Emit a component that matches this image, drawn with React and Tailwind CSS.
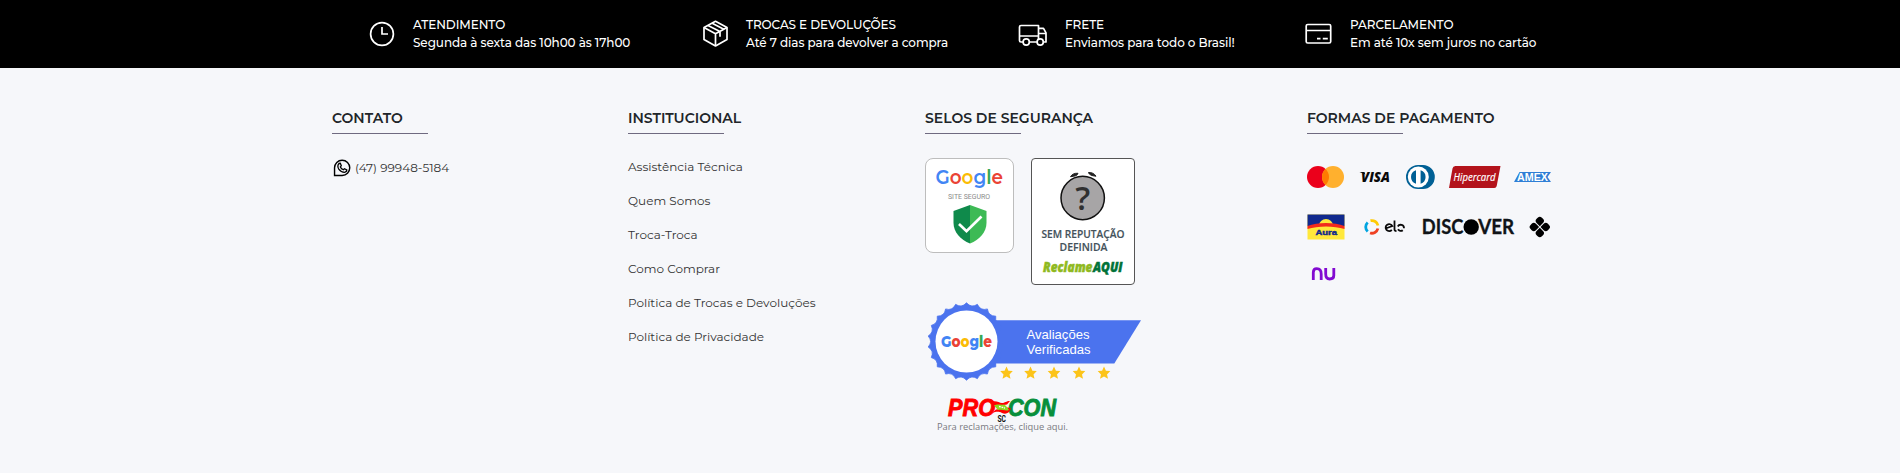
const LINKS = [
  "Assistência Técnica",
  "Quem Somos",
  "Troca-Troca",
  "Como Comprar",
  "Política de Trocas e Devoluções",
  "Política de Privacidade",
];

function ClockIcon() {
  return (
    <svg width="28" height="28" viewBox="0 0 28 28" fill="none" stroke="white" strokeWidth="1.7">
      <circle cx="14" cy="14" r="11.4" />
      <path d="M14 7v7h6" />
    </svg>
  );
}

function BoxIcon() {
  return (
    <svg width="28" height="28" viewBox="0 0 28 28" fill="none" stroke="white" strokeWidth="1.7" strokeLinejoin="round">
      <path d="M14.500 1.300 26 7.500v12L14.500 26 3 19.500V7.500Z" />
      <path d="M3 7.500 14.500 13.800 26 7.500M14.500 13.800V26M7 5.600l12 6v5.200M11.200 3.300l11.600 6" />
    </svg>
  );
}

function TruckIcon() {
  return (
    <svg width="30" height="28" viewBox="0 0 30 28" fill="none" stroke="white" strokeWidth="1.7" strokeLinejoin="round">
      <path d="M5 22H3a1.500 1.500 0 0 1-1.500-1.500V7A1.500 1.500 0 0 1 3 5.500h17.500V22h-9M1.500 16h19M20.500 8.300h5l2.500 4.500V22h-2M28 13.500h-7.500" />
      <circle cx="8.200" cy="22" r="3.100" />
      <circle cx="22.200" cy="22" r="3.100" fill="black" />
    </svg>
  );
}

function CardIcon() {
  return (
    <svg width="28" height="28" viewBox="0 0 28 28" fill="none" stroke="white" strokeWidth="1.700">
      <rect x="1.200" y="4.500" width="24.500" height="18.500" rx="1.500" />
      <path d="M1.200 10.500h24.500M12 18.700h3.500M17.800 18.700h5" />
    </svg>
  );
}

function Perk({ icon, title, text, className }) {
  return (
    <div className={"flex items-center " + className}>
      {icon}
      <div className="ml-[17px] whitespace-nowrap text-[12px] leading-[18px] font-medium tracking-[-0.08px] text-white">
        <p>{title}</p>
        <p>{text}</p>
      </div>
    </div>
  );
}

function Title({ children }) {
  return (
    <h3 className="whitespace-nowrap text-[14px] leading-[20px] font-semibold text-[#212529]">
      {children}
      <span className="mt-[5px] block h-px w-24 bg-[#6f6a80]" />
    </h3>
  );
}

function GoogleWord({ x, y, width, size, bold }) {
  return (
    <text x={x} y={y} fontSize={size} textLength={width} lengthAdjust="spacingAndGlyphs" fontFamily="Montserrat, Inter, sans-serif" fontWeight={bold ? 800 : 600}>
      <tspan fill="#4285f4">G</tspan>
      <tspan fill="#ea4335">o</tspan>
      <tspan fill="#fbbc05">o</tspan>
      <tspan fill="#4285f4">g</tspan>
      <tspan fill="#34a853">l</tspan>
      <tspan fill="#ea4335">e</tspan>
    </text>
  );
}

function SafeSiteSeal() {
  return (
    <div className="h-[95px] w-[89px] rounded-[8px] border border-[#bdbdbd] bg-white">
      <svg className="overflow-visible" width="87" height="93" viewBox="1 1 87 93">
        <GoogleWord x="10.500" y="25.500" width="67.500" size="21" />
        <text x="23" y="41" fontSize="7.200" textLength="42" lengthAdjust="spacingAndGlyphs" fill="#8a8a8a" fontFamily="Roboto, sans-serif">SITE SEGURO</text>
        <path d="M45 47 28.500 53v12c0 9 7 17 16.500 20.500Z" fill="#0f8a4b" />
        <path d="M45 47 61.500 53v12c0 9-7 17-16.500 20.500Z" fill="#3dba55" />
        <path d="m34 66 7.500 7.200L56.500 58.500" fill="none" stroke="white" strokeWidth="2.700" />
      </svg>
    </div>
  );
}

function ReputationSeal() {
  return (
    <div className="h-[127px] w-[104px] rounded-[4px] border border-[#555] bg-white">
      <svg className="overflow-visible" width="102" height="125" viewBox="1 1 102 125">
        <circle cx="51.700" cy="40" r="21.700" fill="#a7a5a6" stroke="#111" strokeWidth="1.500" />
        <path d="M39.500 18.700c1.500-2.500 4-3.700 7.500-3.400-.5 2.200-3 3-7.500 3.400ZM65 18.200c-1.500-2.500-4.500-4-7.500-3.700.5 2.200 3.500 3.400 7.500 3.700Z" fill="#222" stroke="#222" />
        <text x="51.700" y="52" textAnchor="middle" fontSize="33" fontWeight="600" fill="#303030" fontFamily="'Open Sans', sans-serif">?</text>
        <g fontFamily="'Open Sans', sans-serif" fontSize="10.500" fontWeight="600" fill="#44525b" stroke="#44525b" strokeWidth="0.150">
          <text x="10.500" y="80" textLength="83" lengthAdjust="spacingAndGlyphs">SEM REPUTAÇÃO</text>
          <text x="28.500" y="93" textLength="48" lengthAdjust="spacingAndGlyphs">DEFINIDA</text>
        </g>
        <g fontFamily="'Open Sans', sans-serif" fontSize="14" fontWeight="800" fontStyle="italic" strokeWidth="0.500">
          <text x="12" y="113.700" textLength="49.500" lengthAdjust="spacingAndGlyphs" fill="#8fb920" stroke="#8fb920">Reclame</text>
          <text x="62" y="113.700" textLength="29.500" lengthAdjust="spacingAndGlyphs" fill="#007238" stroke="#007238">AQUI</text>
        </g>
      </svg>
    </div>
  );
}

function scallopedDisc(cx, cy, outer, inner, lobes) {
  const point = (i, r) => {
    const a = (i * Math.PI) / lobes - Math.PI / 2;
    return `${(cx + r * Math.cos(a)).toFixed(2)} ${(cy + r * Math.sin(a)).toFixed(2)}`;
  };
  let d = `M${point(0, inner)}`;
  for (let i = 0; i < lobes; i++) d += `Q${point(2 * i + 1, outer)} ${point(2 * i + 2, inner)}`;
  return d + "Z";
}

const STARS = [81.500, 105.500, 129, 154, 179];

function VerifiedReviews() {
  return (
    <svg className="overflow-visible" width="220" height="82" viewBox="0 0 220 82">
      <path d="M60 20.200h156L189.300 63.500H60Z" fill="#4b73ee" />
      <path d={scallopedDisc(41.500, 41.500, 33.500, 38.700, 22)} fill="#4b73ee" stroke="#4b73ee" strokeWidth="0.800" strokeLinejoin="round" />
      <circle cx="41.500" cy="41.500" r="31" fill="white" />
      <GoogleWord x="16" y="46.500" width="51" size="16.500" bold />
      <g fill="white" fontFamily="'Liberation Sans', sans-serif" fontSize="13">
        <text x="101.500" y="39" textLength="63" lengthAdjust="spacingAndGlyphs">Avaliações</text>
        <text x="101.500" y="53.500" textLength="64" lengthAdjust="spacingAndGlyphs">Verificadas</text>
      </g>
      {STARS.map((x) => (
        <path key={x} transform={`translate(${x} 73)`} d="M0-6.500 1.900-2.200 6.300-1.900 3 1.400 4 5.800 0 3.500-4 5.800-3 1.400-6.300-1.900-1.900-2.200Z" fill="#fcc419" />
      ))}
    </svg>
  );
}

function Procon() {
  return (
    <svg className="overflow-visible" width="150" height="42" viewBox="0 0 150 42">
      <g fontFamily="'Liberation Sans', sans-serif" fontStyle="italic" fontWeight="700" fontSize="23" strokeWidth="0.900">
        <text x="23" y="23.500" textLength="47" lengthAdjust="spacingAndGlyphs" fill="#f00" stroke="#f00">PRO</text>
        <text x="83" y="23.500" textLength="48" lengthAdjust="spacingAndGlyphs" fill="#078f3b" stroke="#078f3b">CON</text>
      </g>
      <path d="M66 10c5-2 8 1 11 1 3 0 4-2 8-2l-3 3.500-13 2ZM67 21l4-3.500 12-2 3 1c-2 5-5 6-9 4.500-4-2-6-1-10 0Z" fill="#f00" />
      <path d="M69 13.500c4-2 6 0 10-1 2 1 4 3.500 5 5.500-4 1.500-7-1-11 0Z" fill="#8ddb20" />
      <path d="M74 14.500l6 1.500" stroke="white" strokeWidth="1.300" strokeDasharray="1.800 .8" />
      <text x="72.500" y="30" fontSize="9.500" textLength="8.500" lengthAdjust="spacingAndGlyphs" fontWeight="700" fill="#111" stroke="#f6f7fa" strokeWidth="1" paintOrder="stroke" fontFamily="Roboto, sans-serif">SC</text>
      <text x="12" y="37.500" fontSize="9.500" textLength="131" lengthAdjust="spacingAndGlyphs" fill="#78797f" fontFamily="'Open Sans', sans-serif">Para reclamações, clique aqui.</text>
    </svg>
  );
}

function Mastercard() {
  return (
    <svg width="37" height="26" viewBox="0 0 37 26">
      <circle cx="11" cy="13" r="11" fill="#eb001b" />
      <circle cx="26" cy="13" r="11" fill="#ffb02e" />
      <path d="M18.500 4.950a11 11 0 0 1 0 16.100 11 11 0 0 1 0-16.100Z" fill="#ff7a00" />
    </svg>
  );
}

function Visa() {
  return (
    <svg className="overflow-visible" width="32" height="26" viewBox="0 0 32 26">
      <text x="1" y="18" fontSize="14" textLength="29" lengthAdjust="spacingAndGlyphs" fontWeight="800" fontStyle="italic" fill="#0a0a0a" fontFamily="'Open Sans', sans-serif">VISA</text>
      <path d="M-.5 8h4.500l1.500 2.500Z" fill="#0a0a0a" />
    </svg>
  );
}

function Diners() {
  return (
    <svg width="30" height="26" viewBox="0 0 30 26">
      <path d="M12 1h5a11.800 12 0 0 1 0 24h-5a12 12 0 0 1 0-24Z" fill="#006095" />
      <circle cx="12.300" cy="13" r="10.500" fill="white" />
      <path d="M10 6.300a7 7 0 0 0 0 13.400ZM14.600 6.300a7 7 0 0 1 0 13.400Z" fill="#006095" />
    </svg>
  );
}

function Hipercard() {
  return (
    <svg className="overflow-visible" width="52" height="26" viewBox="0 0 52 26">
      <path d="M6.500 2H51.500l-3.800 20a2.500 2.500 0 0 1-2.500 2H0L3.500 4.500A3 3 0 0 1 6.500 2Z" fill="#b3131b" />
      <text x="4.500" y="16.700" fontSize="11.500" textLength="42" lengthAdjust="spacingAndGlyphs" fontStyle="italic" fill="white" stroke="white" strokeWidth="0.200" fontFamily="'Open Sans', sans-serif">Hipercard</text>
    </svg>
  );
}

function Amex() {
  return (
    <svg className="overflow-visible" width="38" height="26" viewBox="0 0 38 26">
      <path d="M5.500 8H37l-3.500 5 3.500 5H0Z" fill="#2f7fd6" />
      <text x="3" y="16.700" fontSize="10.500" textLength="31" lengthAdjust="spacingAndGlyphs" fontWeight="700" fill="white" fontFamily="'Liberation Sans', sans-serif">AMEX</text>
    </svg>
  );
}

function Aura() {
  return (
    <svg width="38" height="26" viewBox="0 0 38 26">
      <path d="M.5.500h37v25H.500Z" fill="#ffe83b" />
      <path d="M.500.500h37V12H.500Z" fill="#10298e" />
      <path d="M12 11.500a7 6.500 0 0 1 14 0Z" fill="#ffe83b" />
      <path d="M.500 12c10-4 27-4 37 0V15C27 11.500 11 11.500.500 15Z" fill="#f22a1d" />
      <text x="8.500" y="21.200" fontSize="7" textLength="21.500" lengthAdjust="spacingAndGlyphs" fontWeight="700" fill="#10298e" stroke="#10298e" strokeWidth="0.400" fontFamily="'Liberation Sans', sans-serif">Aura</text>
    </svg>
  );
}

function Elo() {
  return (
    <svg width="42" height="26" viewBox="0 0 42 26">
      <g fill="none" strokeWidth="2.800">
        <path d="M6.500 6.700A6.300 6.300 0 0 1 14 11.500" stroke="#ffcb05" />
        <path d="M13.900 14.500A6.300 6.300 0 0 1 6 19" stroke="#ef4123" />
        <path d="M3.700 8.400a6.300 6.300 0 0 0 0 9.200" stroke="#00a4e0" />
      </g>
      <g fill="none" stroke="#0a0a0a" strokeWidth="1.800">
        <path d="M27.800 15.900a3.500 3.500 0 1 1 .500-3.800l-6.700 2.400M30.500 6.500V15.500q0 1.500 2 1.600M34 15.300a3.300 3.300 0 0 0 4.800.9M33.800 12.500a3.300 3.300 0 0 1 6.200 1.700" />
      </g>
    </svg>
  );
}

function Discover() {
  return (
    <svg className="overflow-visible" width="92" height="26" viewBox="0 0 92 26">
      <g fontFamily="Lato, sans-serif" fontWeight="700" fontSize="20.500" fill="#101418" stroke="#101418" strokeWidth="0.300">
        <text x="-1.200" y="20.300" textLength="41.500" lengthAdjust="spacingAndGlyphs">DISC</text>
        <text x="55.200" y="20.300" textLength="36" lengthAdjust="spacingAndGlyphs">VER</text>
      </g>
      <circle cx="48.200" cy="13" r="7.700" fill="black" />
    </svg>
  );
}

function Pix() {
  return (
    <svg width="22" height="26" viewBox="0 0 22 26">
      <g transform="translate(10.800 13) rotate(45)" fill="black">
        <path d="M-.5-.5h-4.500a3 3 0 0 1-3-3v-1.500a3 3 0 0 1 3-3h1.500a3 3 0 0 1 3 3Z" />
        <path d="M.5-.5v-4.500a3 3 0 0 1 3-3h1.500a3 3 0 0 1 3 3v1.500a3 3 0 0 1-3 3Z" />
        <path d="M.5.5h4.500a3 3 0 0 1 3 3v1.500a3 3 0 0 1-3 3h-1.500a3 3 0 0 1-3-3Z" />
        <path d="M-.5.5v4.500a3 3 0 0 1-3 3h-1.500a3 3 0 0 1-3-3v-1.500a3 3 0 0 1 3-3Z" />
      </g>
    </svg>
  );
}

function Nubank() {
  return (
    <svg width="26" height="26" viewBox="0 0 26 26" fill="none" stroke="#820ad1">
      <path d="M2.300 20V12.500Q2.300 8.700 5.800 8.700Q10.200 8.700 10.200 14V20" strokeWidth="2.800" />
      <path d="M14.700 8v6q0 5 4 5Q22.800 19 22.800 15.500V8" strokeWidth="2.800" />
    </svg>
  );
}

export default function App() {
  return (
    <div className="h-[473px] w-[1900px] overflow-hidden bg-[#f6f7fa] font-['Montserrat','Inter',sans-serif]">
      <div className="flex h-[68px] bg-black pl-[368px]">
        <Perk className="w-[333px]" icon={<ClockIcon />} title="ATENDIMENTO" text="Segunda à sexta das 10h00 às 17h00" />
        <Perk className="w-[317px]" icon={<BoxIcon />} title="TROCAS E DEVOLUÇÕES" text="Até 7 dias para devolver a compra" />
        <Perk className="w-[287px]" icon={<TruckIcon />} title="FRETE" text="Enviamos para todo o Brasil!" />
        <Perk className="" icon={<CardIcon />} title="PARCELAMENTO" text="Em até 10x sem juros no cartão" />
      </div>
      <footer className="flex pt-10 pl-[332px]">
        <section className="w-[296px]">
          <Title>CONTATO</Title>
          <p className="mt-6 flex items-center text-[12px] leading-5 text-[#333]">
            <svg className="mr-[4px] ml-[1px]" width="18" height="18" viewBox="0 0 18 18" fill="none" stroke="black" strokeWidth="1.500">
              <path d="M1 17V9a8 8 0 1 1 8 8Z" transform="translate(.6 .3) scale(.95)" />
              <path d="M6 4.500 7.300 4.300 8.300 6.700 7.400 7.900Q8.300 10 10.400 10.700L11.500 9.700 13.800 10.800Q13.800 13 11.500 13.300 8 13.300 5.800 10.100 3.800 6.800 6 4.500Z" strokeWidth="1.300" />
            </svg>
            (47) 99948-5184
          </p>
        </section>
        <section className="w-[297px]">
          <Title>INSTITUCIONAL</Title>
          <ul className="mt-[23px] flex flex-col gap-[14px] text-[12px] leading-5 text-[#333]">
            {LINKS.map((link) => (
              <li key={link}>{link}</li>
            ))}
          </ul>
        </section>
        <section className="w-[382px]">
          <Title>SELOS DE SEGURANÇA</Title>
          <div className="mt-6 flex items-start gap-[17px]">
            <SafeSiteSeal />
            <ReputationSeal />
          </div>
          <div className="mt-[15px] flex flex-col">
            <VerifiedReviews />
            <div className="mt-[10px]">
              <Procon />
            </div>
          </div>
        </section>
        <section>
          <Title>FORMAS DE PAGAMENTO</Title>
          <div className="mt-[30px] flex">
            <div className="mr-4"><Mastercard /></div>
            <div className="mr-[14px]"><Visa /></div>
            <div className="mr-[13px]"><Diners /></div>
            <div className="mr-[13px]"><Hipercard /></div>
            <Amex />
          </div>
          <div className="mt-6 flex">
            <div className="mr-[19px]"><Aura /></div>
            <div className="mr-[17px]"><Elo /></div>
            <div className="mr-[14px]"><Discover /></div>
            <Pix />
          </div>
          <div className="mt-5 ml-1 flex">
            <Nubank />
          </div>
        </section>
      </footer>
    </div>
  );
}
